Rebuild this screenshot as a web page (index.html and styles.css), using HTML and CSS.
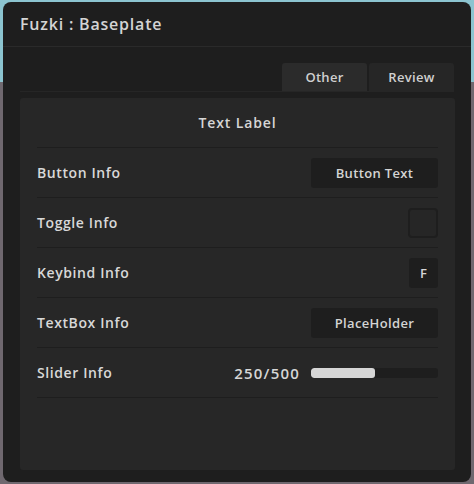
FILE: index.html
```html
<!DOCTYPE html>
<html>
<head>
<meta charset="utf-8">
<link rel="stylesheet" href="styles.css">
</head>
<body>
<div class="bg-top"></div>
<div class="window">
  <div class="titlebar">Fuzki : Baseplate</div>
  <div class="tabbar">
    <div class="tabs">
      <div class="tab active">Other</div>
      <div class="tab">Review</div>
    </div>
  </div>
  <div class="panel">
    <div class="heading">Text Label</div>
    <div class="row">
      <span class="label">Button Info</span>
      <div class="btn">Button Text</div>
    </div>
    <div class="row">
      <span class="label">Toggle Info</span>
      <div class="toggle"></div>
    </div>
    <div class="row">
      <span class="label">Keybind Info</span>
      <div class="key">F</div>
    </div>
    <div class="row">
      <span class="label">TextBox Info</span>
      <div class="btn">PlaceHolder</div>
    </div>
    <div class="row">
      <span class="label">Slider Info</span>
      <div class="slider-wrap">
        <span class="value">250/500</span>
        <div class="track"><div class="fill" style="width:50%"></div></div>
      </div>
    </div>
  </div>
</div>
</body>
</html>
```
FILE: styles.css
```css
html, body {
  margin: 0;
  padding: 0;
}
body {
  width: 474px;
  height: 484px;
  background: #6f686f;
  position: relative;
  overflow: hidden;
  font-family: "Open Sans", "Liberation Sans", sans-serif;
  color: #d6d6d6;
}
.bg-top {
  position: absolute;
  left: 0;
  top: 0;
  width: 474px;
  height: 82px;
  background: #8cc4d0;
}
.window {
  position: absolute;
  left: 3px;
  top: 2px;
  width: 468px;
  height: 480px;
  background: #1e1e1e;
  border-radius: 8px;
  display: flex;
  flex-direction: column;
}
.titlebar {
  height: 44px;
  border-bottom: 1px solid #2a2a2a;
  padding-left: 17px;
  font-size: 16px;
  font-weight: 600;
  letter-spacing: 0.8px;
  line-height: 44px;
  color: #d4d4d4;
}
.tabbar {
  margin: 16px 17px 0 17px;
  height: 28px;
  border-bottom: 1px solid #262626;
  display: flex;
  justify-content: flex-end;
}
.tabs {
  display: flex;
  gap: 2px;
}
.tab {
  width: 85px;
  height: 28px;
  background: #262626;
  border-radius: 3px 3px 0 0;
  font-size: 13px;
  font-weight: 600;
  letter-spacing: 0.3px;
  line-height: 28px;
  text-align: center;
  color: #d0d0d0;
}
.tab.active {
  background: #2b2b2b;
}
.panel {
  margin: 6px 16px 0 17px;
  height: 372px;
  background: #272727;
  border-radius: 3px;
  padding: 0 17px;
}
.heading {
  height: 49px;
  line-height: 49px;
  text-align: center;
  font-size: 14px;
  font-weight: 600;
  letter-spacing: 0.85px;
  border-bottom: 1px solid #1e1e1e;
}
.row {
  height: 49px;
  border-bottom: 1px solid #1e1e1e;
  display: flex;
  align-items: center;
  justify-content: space-between;
}
.label {
  font-size: 14px;
  font-weight: 600;
  letter-spacing: 0.6px;
  color: #d8d8d8;
}
.btn {
  width: 127px;
  height: 30px;
  background: #1e1e1e;
  border-radius: 3px;
  font-size: 13px;
  font-weight: 600;
  letter-spacing: 0.35px;
  line-height: 30px;
  text-align: center;
  color: #d4d4d4;
}
.toggle {
  width: 26px;
  height: 26px;
  border: 2px solid #1e1e1e;
  border-radius: 4px;
  background: #262626;
}
.key {
  width: 29px;
  height: 30px;
  background: #1e1e1e;
  border-radius: 3px;
  font-size: 13px;
  font-weight: 600;
  line-height: 30px;
  text-align: center;
}
.slider-wrap {
  display: flex;
  align-items: center;
  gap: 11px;
}
.value {
  font-size: 15px;
  font-weight: 600;
  letter-spacing: 1.2px;
}
.track {
  width: 127px;
  height: 10px;
  background: #1e1e1e;
  border-radius: 3px;
  overflow: hidden;
}
.fill {
  height: 100%;
  background: #d6d6d6;
  border-radius: 3px;
}
```
